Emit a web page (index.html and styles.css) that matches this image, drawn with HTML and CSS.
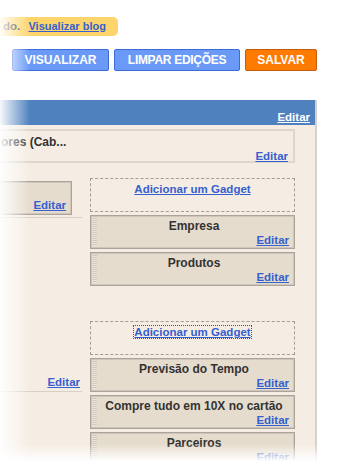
FILE: index.html
```html
<!DOCTYPE html>
<html>
<head>
  <meta charset="UTF-8">
  <title>Elementos da página</title>
  <link rel="stylesheet" href="styles.css">
</head>
<body>
  <div class="notice">
    <span class="notice-text">do.</span>
    <a href="#" class="notice-link">Visualizar blog</a>
  </div>

  <div class="actions">
    <button class="btn btn-preview">VISUALIZAR</button>
    <button class="btn btn-clear">LIMPAR EDIÇÕES</button>
    <button class="btn btn-save">SALVAR</button>
  </div>

  <div class="layout">
    <div class="layout-header">
      <a href="#" class="edit edit-light">Editar</a>
    </div>
    <div class="layout-body">
      <div class="header-widget">
        <div class="header-title">ores (Cab...</div>
        <a href="#" class="edit">Editar</a>
      </div>

      <div class="columns">
        <div class="main-col">
          <div class="gadget gadget-cut">
            <a href="#" class="edit">Editar</a>
          </div>
          <div class="main-posts">
            <a href="#" class="edit">Editar</a>
          </div>
        </div>

        <div class="side-col">
          <div class="section">
            <div class="add-gadget"><a href="#">Adicionar um Gadget</a></div>
            <div class="gadget">
              <div class="gadget-title">Empresa</div>
              <a href="#" class="edit">Editar</a>
            </div>
            <div class="gadget">
              <div class="gadget-title">Produtos</div>
              <a href="#" class="edit">Editar</a>
            </div>
          </div>

          <div class="section section-second">
            <div class="add-gadget"><a href="#" class="focused">Adicionar um Gadget</a></div>
            <div class="gadget">
              <div class="gadget-title">Previsão do Tempo</div>
              <a href="#" class="edit">Editar</a>
            </div>
            <div class="gadget">
              <div class="gadget-title">Compre tudo em 10X no cartão</div>
              <a href="#" class="edit">Editar</a>
            </div>
            <div class="gadget">
              <div class="gadget-title">Parceiros</div>
              <a href="#" class="edit">Editar</a>
            </div>
          </div>
        </div>
      </div>
    </div>
  </div>

  <div class="fade-left"></div>
  <div class="fade-bottom"></div>
</body>
</html>
```

FILE: styles.css
```css
body {
  font-family: "Liberation Sans", Arial, sans-serif;
  background: #fff;
  margin: 0;
  width: 350px;
  height: 464px;
  overflow: hidden;
  position: relative;
}
a {
  color: #3560d0;
  font-weight: bold;
  font-size: 11.5px;
  text-decoration: underline;
}

.notice {
  display: inline-block;
  margin-top: 17px;
  height: 19px;
  line-height: 19px;
  padding: 0 12px 0 3px;
  background: #fdd56c;
  border-radius: 0 5px 5px 0;
  font-size: 11.5px;
}
.notice-text {
  font-weight: bold;
  color: #333;
  margin-right: 5px;
}
.notice-link {
  font-size: 11px;
}

.actions {
  display: flex;
  gap: 5px;
  margin-top: 13px;
  padding-left: 12px;
}
.btn {
  height: 22px;
  padding: 0;
  font-family: "Liberation Sans", Arial, sans-serif;
  font-size: 12px;
  font-weight: bold;
  color: #fff;
  border: 1px solid #3b6bd6;
  border-radius: 2px;
  background: #6a9af6;
  cursor: pointer;
}
.btn-preview {
  width: 97px;
}
.btn-clear {
  width: 126px;
  letter-spacing: -0.3px;
}
.btn-save {
  width: 72px;
  background: #ff7b00;
  border-color: #c25d0e;
}

.layout {
  margin-top: 29px;
  width: 315px;
  border-right: 2px solid #d4d0cc;
}
.layout-header {
  height: 25px;
  background: #4f81bf;
  text-align: right;
  padding-right: 5px;
  line-height: 32px;
}
.edit-light {
  color: #fff;
}
.layout-body {
  background: #f5ede3;
  padding-top: 4px;
  height: 340px;
}

.header-widget {
  box-sizing: border-box;
  height: 34px;
  margin-right: 20px;
  border: 2px solid #ddd6cd;
  border-left: none;
  padding: 3px 5px 0 1px;
}
.header-title {
  font-size: 12px;
  font-weight: bold;
  color: #333;
  line-height: 16px;
}
.header-widget .edit {
  display: block;
  text-align: right;
  line-height: 12px;
}

.columns {
  display: flex;
  gap: 8px;
  margin-top: 15px;
}
.main-col {
  width: 82px;
}
.main-col .gadget-cut {
  width: 72px;
  border-left: none;
  padding-top: 17px;
}
.main-posts {
  margin-top: 2px;
  border-top: 1px solid #d9d1c6;
  height: 173px;
  border-bottom: 1px solid #d9d1c6;
  display: flex;
  align-items: flex-end;
  justify-content: flex-end;
  padding-right: 2px;
  line-height: 18px;
}

.side-col {
  width: 205px;
}
.section-second {
  margin-top: 35px;
}
.add-gadget {
  box-sizing: border-box;
  height: 34px;
  border: 1px dashed #a39c94;
  text-align: center;
  padding-top: 1px;
  line-height: 16px;
}
.focused {
  outline: 1px dotted #555;
}

.gadget {
  position: relative;
  box-sizing: border-box;
  height: 34px;
  margin-top: 3px;
  padding: 3px 5px 0 8px;
  background: #e6dccd;
  border: 1px solid #aaa49c;
  box-shadow: inset 0 0 0 1px #cfc6b9;
}
.gadget::before {
  content: "";
  position: absolute;
  left: 2px;
  top: 2px;
  bottom: 2px;
  width: 4px;
  background: repeating-linear-gradient(#cfc7bb 0 1px, #ece5da 1px 2px);
}
.gadget-cut::before {
  display: none;
}
.gadget-title {
  font-size: 12px;
  font-weight: bold;
  color: #333;
  text-align: center;
  line-height: 15px;
}
.gadget .edit {
  display: block;
  text-align: right;
  line-height: 12px;
}

.fade-left {
  position: absolute;
  left: 0;
  top: 0;
  bottom: 0;
  width: 30px;
  background: linear-gradient(to right, rgba(255,255,255,0.95), rgba(255,255,255,0));
}
.fade-bottom {
  position: absolute;
  left: 0;
  right: 0;
  bottom: 0;
  height: 20px;
  background: linear-gradient(to bottom, rgba(255,255,255,0), #fff 85%);
}
```
